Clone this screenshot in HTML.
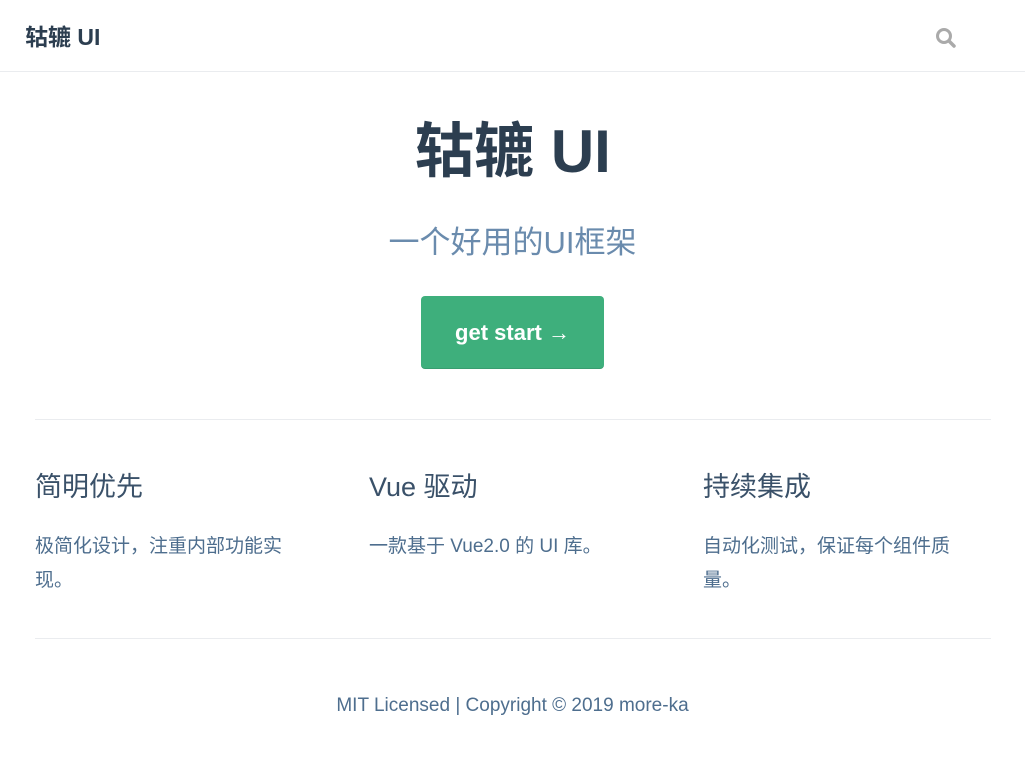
<!DOCTYPE html>
<html><head><meta charset="utf-8"><style>
*{margin:0;padding:0;box-sizing:border-box}
body{width:1025px;height:758px;background:#fff;font-family:"Liberation Sans","Noto Sans CJK SC",sans-serif;color:#2c3e50;overflow:hidden;position:relative}
.nav{height:72px;border-bottom:1px solid #eaecef;position:relative}
.logo{position:absolute;left:25px;top:18px;font-size:23px;font-weight:700;color:#2c3e50}
.search{position:absolute;left:935px;top:27px}
h1{position:absolute;top:103px;width:100%;text-align:center;font-size:60px;font-weight:700;color:#2c3e50}
.desc{position:absolute;top:217px;width:100%;text-align:center;font-size:31px;color:#6a8bad}
.btn{position:absolute;left:421px;top:296px;width:183px;height:73px;background:#3eaf7c;border-radius:4px;color:#fff;font-size:22px;font-weight:700;text-align:center;line-height:73px;border-bottom:1px solid #389d70}
.hr1{position:absolute;left:35px;width:956px;top:419px;border-top:1px solid #eaecef}
.hr2{position:absolute;left:35px;width:956px;top:638px;border-top:1px solid #eaecef}
.f{position:absolute;top:468px;width:268px}
.f h2{font-size:27px;font-weight:400;color:#3a5169;line-height:38px}
.f p{margin-top:24px;font-size:19px;color:#4e6e8e;line-height:34px}
.foot{position:absolute;top:695px;width:100%;text-align:center;font-size:19px;color:#4e6e8e}
</style></head><body>
<div class="nav"><div class="logo">轱辘 UI</div>
<svg class="search" width="22" height="22" viewBox="0 0 22 22"><circle cx="9" cy="9" r="6.5" fill="none" stroke="#aaa" stroke-width="3"/><line x1="14" y1="14" x2="19" y2="19" stroke="#aaa" stroke-width="3.5" stroke-linecap="round"/></svg></div>
<h1>轱辘 UI</h1>
<div class="desc">一个好用的UI框架</div>
<div class="btn">get start →</div>
<div class="hr1"></div>
<div class="f" style="left:35px"><h2>简明优先</h2><p>极简化设计，注重内部功能实现。</p></div>
<div class="f" style="left:369px"><h2>Vue 驱动</h2><p>一款基于 Vue2.0 的 UI 库。</p></div>
<div class="f" style="left:703px"><h2>持续集成</h2><p>自动化测试，保证每个组件质量。</p></div>
<div class="hr2"></div>
<div class="foot">MIT Licensed | Copyright © 2019 more-ka</div>
</body></html>
